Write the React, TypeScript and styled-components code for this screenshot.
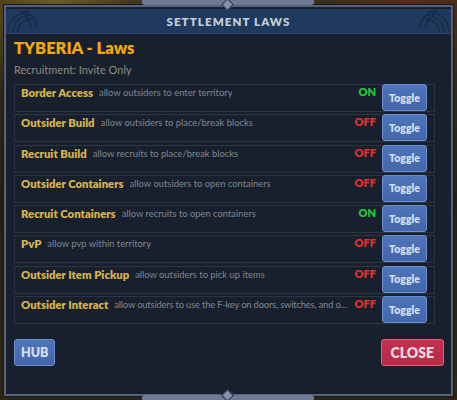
import styled, { createGlobalStyle } from 'styled-components';

const GlobalStyle = createGlobalStyle`
  html, body { margin: 0; padding: 0; }
  body {
    width: 457px;
    height: 400px;
    overflow: hidden;
    font-family: Lato, 'Open Sans', sans-serif;
    background: #2b2416;
  }
`;

type Law = {
  name: string;
  desc: string;
  on: boolean;
};

const laws: Law[] = [
  { name: 'Border Access', desc: 'allow outsiders to enter territory', on: true },
  { name: 'Outsider Build', desc: 'allow outsiders to place/break blocks', on: false },
  { name: 'Recruit Build', desc: 'allow recruits to place/break blocks', on: false },
  { name: 'Outsider Containers', desc: 'allow outsiders to open containers', on: false },
  { name: 'Recruit Containers', desc: 'allow recruits to open containers', on: true },
  { name: 'PvP', desc: 'allow pvp within territory', on: false },
  { name: 'Outsider Item Pickup', desc: 'allow outsiders to pick up items', on: false },
  { name: 'Outsider Interact', desc: 'allow outsiders to use the F-key on doors, switches, and o...', on: false },
];

const Scene = styled.div`
  position: relative;
  width: 457px;
  height: 400px;
  box-sizing: border-box;
  padding: 5px 4px 4px 4px;
  background:
    radial-gradient(circle at 12% 0%, #6b5a22 0%, transparent 18%),
    radial-gradient(circle at 90% 2%, #5a2a14 0%, transparent 14%),
    linear-gradient(180deg, #3a2f18 0%, #241e12 50%, #2e2614 100%);
`;

const Ornament = styled.div<{ $bottom?: boolean }>`
  position: absolute;
  left: 142px;
  width: 172px;
  height: 5px;
  ${p => (p.$bottom ? 'bottom: 0;' : 'top: 0;')}
  background: #6f7a95;
  border-radius: ${p => (p.$bottom ? '3px 3px 0 0' : '0 0 3px 3px')};
  z-index: 2;
  &::after {
    content: '';
    position: absolute;
    left: 81px;
    ${p => (p.$bottom ? 'top: -4px;' : 'bottom: -4px;')}
    width: 7px;
    height: 7px;
    background: #8290ad;
    border: 1px solid #2a3248;
    transform: rotate(45deg);
  }
`;

const Frame = styled.div`
  position: relative;
  height: 100%;
  box-sizing: border-box;
  border: 2px solid #56627c;
  box-shadow: inset 0 0 0 1px #1a2130, 0 0 0 1px #151a24;
  background: #19202d;
  display: flex;
  flex-direction: column;
`;

const Header = styled.div`
  position: relative;
  height: 24px;
  margin-top: 2px;
  background: #1f3a5d;
  border-bottom: 1px solid #2a4670;
  display: flex;
  align-items: center;
  justify-content: center;
  overflow: hidden;
`;

const HeaderTitle = styled.div`
  font-family: Lato, sans-serif;
  font-weight: 800;
  font-size: 11.5px;
  letter-spacing: 1.1px;
  color: #c3cdd9;
`;

const Knot = styled.svg<{ $right?: boolean }>`
  position: absolute;
  top: 0;
  ${p => (p.$right ? 'right: 0; transform: scaleX(-1);' : 'left: 0;')}
  width: 34px;
  height: 24px;
`;

const Body = styled.div`
  flex: 1;
  display: flex;
  flex-direction: column;
  padding: 3px 7px 0 8px;
`;

const Title = styled.div`
  font-weight: 800;
  font-size: 16.5px;
  color: #f3a80b;
  line-height: 22px;
`;

const Subtitle = styled.div`
  margin-top: 4px;
  font-size: 11px;
  color: #8b8d7f;
  line-height: 14px;
`;

const List = styled.div`
  margin-top: 7px;
  margin-right: 9px;
  display: flex;
  flex-direction: column;
  gap: 2.3px;
`;

const Row = styled.div`
  height: 28px;
  box-sizing: border-box;
  border: 1px solid #2c3542;
  display: flex;
  align-items: flex-start;
  padding: 0 7px 0 6px;
`;

const Name = styled.span`
  flex: none;
  margin-right: 6px;
  font-weight: 800;
  font-size: 11.3px;
  color: #d8b34b;
  line-height: 14px;
  margin-top: 1px;
  white-space: nowrap;
`;

const Desc = styled.span<{ $long: boolean }>`
  flex: 0 1 auto;
  min-width: 0;
  font-size: 9.4px;
  letter-spacing: ${p => (p.$long ? '-0.18px' : '0')};
  color: #7f8691;
  line-height: 14px;
  margin-top: 1px;
  white-space: nowrap;
  overflow: hidden;
  text-overflow: ellipsis;
`;

const Status = styled.span<{ $on: boolean }>`
  flex: none;
  margin-left: auto;
  margin-right: 6px;
  font-weight: 800;
  font-size: 11px;
  line-height: 14px;
  color: ${p => (p.$on ? '#23c63b' : '#e3302f')};
`;

const Toggle = styled.button`
  flex: none;
  width: 45px;
  height: 27px;
  margin-top: -1px;
  padding: 0;
  border: 1px solid #6c8fd0;
  border-radius: 3px;
  background: linear-gradient(180deg, #4e74b9 0%, #4466ab 100%);
  color: #d3def0;
  font-family: Lato, sans-serif;
  font-weight: 800;
  font-size: 10.5px;
  cursor: pointer;
`;

const Footer = styled.div`
  margin-top: 15px;
  display: flex;
  justify-content: space-between;
  align-items: center;
`;

const ActionButton = styled.button<{ $variant: 'blue' | 'red' }>`
  height: 27px;
  padding: 0 ${p => (p.$variant === 'red' ? '9px' : '6px')};
  border-radius: 3px;
  border: 1px solid ${p => (p.$variant === 'red' ? '#e0607a' : '#6c8fd0')};
  background: ${p =>
    p.$variant === 'red'
      ? 'linear-gradient(180deg, #c5304f 0%, #b62a47 100%)'
      : 'linear-gradient(180deg, #4e74b9 0%, #4466ab 100%)'};
  color: ${p => (p.$variant === 'red' ? '#ecd9de' : '#d3def0')};
  font-family: Lato, sans-serif;
  font-weight: 800;
  font-size: ${p => (p.$variant === 'red' ? '14px' : '12.5px')};
  cursor: pointer;
`;

function KnotIcon({ right }: { right?: boolean }) {
  return (
    <Knot $right={right} viewBox="0 0 34 24" fill="none" stroke="#162c48" strokeWidth="1.6">
      <path d="M2 24 C2 12 10 4 22 2" />
      <path d="M7 24 C7 14 13 8 24 6" />
      <path d="M12 24 C12 16 17 11 26 10" />
      <path d="M14 2 C20 6 24 12 26 20" />
      <path d="M20 2 C26 6 30 12 31 18" />
    </Knot>
  );
}

export default function App() {
  return (
    <>
      <GlobalStyle />
      <Scene>
        <Ornament />
        <Frame>
          <Header>
            <KnotIcon />
            <HeaderTitle>SETTLEMENT LAWS</HeaderTitle>
            <KnotIcon right />
          </Header>
          <Body>
            <Title>TYBERIA - Laws</Title>
            <Subtitle>Recruitment: Invite Only</Subtitle>
            <List>
              {laws.map(law => (
                <Row key={law.name}>
                  <Name>{law.name}</Name>
                  <Desc $long={law.desc.length > 50}>{law.desc}</Desc>
                  <Status $on={law.on}>{law.on ? 'ON' : 'OFF'}</Status>
                  <Toggle>Toggle</Toggle>
                </Row>
              ))}
            </List>
            <Footer>
              <ActionButton $variant="blue">HUB</ActionButton>
              <ActionButton $variant="red">CLOSE</ActionButton>
            </Footer>
          </Body>
        </Frame>
        <Ornament $bottom />
      </Scene>
    </>
  );
}
